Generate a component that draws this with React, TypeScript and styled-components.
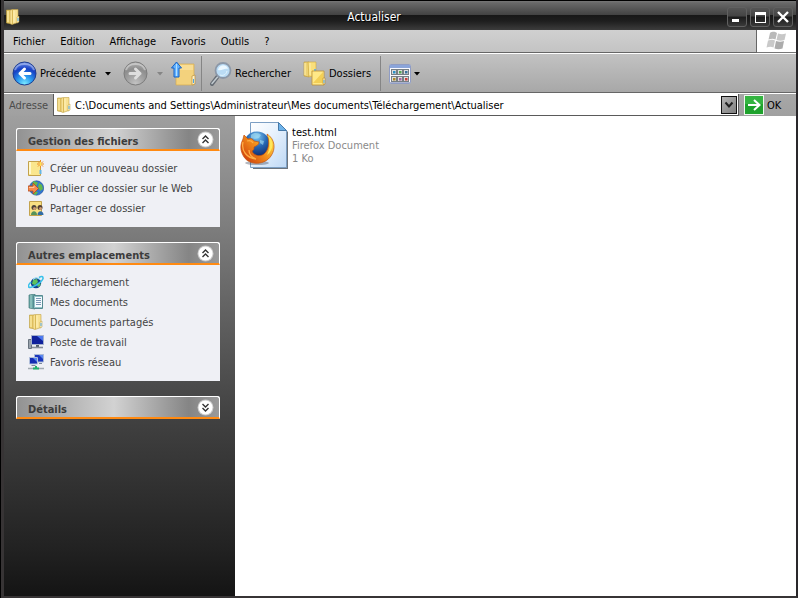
import React from "react";
import styled, { createGlobalStyle, css } from "styled-components";

const uiFont = `"Tahoma", "DejaVu Sans Condensed", "DejaVu Sans", sans-serif`;

const GlobalStyle = createGlobalStyle`
  * { box-sizing: border-box; }
  body { margin: 0; background: #000; font-family: ${uiFont}; font-size: 11px; line-height: 13px; color: #000; }
  button, input { font: inherit; color: inherit; margin: 0; padding: 0; border: 0; background: none; }
  ul, h1, h2, p { margin: 0; padding: 0; font-size: inherit; font-weight: inherit; }
  svg { display: block; flex: none; }
`;

const Window = styled.div`
  min-height: 100vh;
  margin-left: 1px;
  display: flex;
  flex-direction: column;
  border: solid #373435;
  border-width: 0 2px 2px 3px;
  border-right-color: #29272a;
`;

const TitleBar = styled.header`
  height: 30px;
  display: flex;
  align-items: center;
  padding: 3px 3px 0 1px;
  border-top: 1px solid #000;
  background: linear-gradient(#777 0, #686868 2px, #424242 14px, #171717 14px, #1e1e1e 20px, #3c3c3c 29px);
`;

const WindowTitle = styled.h1`
  flex: 1;
  text-align: center;
  color: #fff;
  font-size: 12px;
  line-height: 16px;
  text-shadow: 1px 1px 1px #000;
`;

const WindowButtons = styled.div`
  display: flex;
  gap: 3px;
`;

const WindowButton = styled.button`
  width: 20px;
  height: 20px;
  border: 1px solid #606060;
  border-radius: 3px;
  background: linear-gradient(#555 0, #444 45%, #1b1b1b 50%, #3a3a3a 100%);
`;

const MenuRow = styled.nav`
  height: 24px;
  display: flex;
  background: linear-gradient(#d0d0d0, #c3c3c3);
  border-bottom: 1px solid #fff;
`;

const MenuItems = styled.div`
  flex: 1;
  display: flex;
  padding-left: 1px;
  border-right: 1px solid #666;
  border-bottom: 1px solid #666;
`;

const MenuItem = styled.button`
  padding: 0 7px 0 8px;
`;

const Brand = styled.div`
  width: 39px;
  padding: 1px 0 0 9px;
  background: #fff;
  border-bottom: 1px solid #777;
`;

const ToolBar = styled.div`
  height: 40px;
  display: flex;
  align-items: center;
  padding-left: 8px;
  background: linear-gradient(#c2c2c2, #a7a7a7);
  border-bottom: 1px solid #fff;
  box-shadow: inset 0 -1px #666;
`;

const ToolButton = styled.button<{ $width: number }>`
  display: flex;
  align-items: center;
  gap: 3px;
  min-width: ${(p) => p.$width}px;
  height: 36px;
  text-align: left;
  white-space: nowrap;
`;

const Separator = styled.span`
  width: 1px;
  height: 35px;
  margin-right: 8px;
  background: #858585;
`;

const AddressRow = styled.form`
  height: 22px;
  display: flex;
  align-items: center;
  background: linear-gradient(#a7a7a7, #a0a0a0);
`;

const AddressLabel = styled.label`
  width: 49px;
  padding-left: 5px;
  color: #4c4c4c;
`;

const AddressBox = styled.div`
  flex: 1;
  height: 22px;
  display: flex;
  align-items: center;
  gap: 3px;
  padding: 0 1px 0 2px;
  background: #fff;
  border: solid #5a5a5a;
  border-width: 0 1px 1px 1px;
`;

const AddressInput = styled.input`
  flex: 1;
  min-width: 0;
  height: 18px;
  padding-top: 2px;
  outline: 0;
`;

const DropButton = styled.button`
  width: 16px;
  height: 18px;
  padding-left: 2px;
  border: 1px solid #111;
  background: linear-gradient(135deg, #b4b4b4, #808080);
`;

const GoButton = styled.button`
  display: flex;
  align-items: center;
  gap: 3px;
  width: 57px;
  padding-left: 5px;
`;

const Content = styled.div`
  flex: 1;
  display: flex;
  background: #fff;
`;

const SideBar = styled.aside`
  width: 231px;
  flex: none;
  display: flex;
  flex-direction: column;
  gap: 15px;
  padding: 12px 15px 12px 12px;
  background: linear-gradient(#9f9f9f 0, #8a8a8a 15%, #666 38%, #414141 63%, #222 90%, #141414 100%);
`;

const PanelBox = styled.section`
  background: #eff0f5;
  border-radius: 3px 3px 0 0;
`;

const PanelHeader = styled.button`
  width: 100%;
  height: 23px;
  display: flex;
  align-items: center;
  justify-content: space-between;
  padding: 0 5px 0 11px;
  border: 1px solid #fff;
  border-bottom: 2px solid #ff8a12;
  border-radius: 3px 3px 0 0;
  background: linear-gradient(90deg, #929292 0, #d2d2d2 48%, #858585 85%, #9a9a9a 100%);
  font-weight: bold;
  color: #3c3c3c;
`;

const PanelTitle = styled.span`
  padding-top: 4px;
`;

const PanelList = styled.ul`
  list-style: none;
  padding: 7px 12px 9px 12px;
`;

const PanelLink = styled.a`
  display: flex;
  align-items: center;
  gap: 6px;
  height: 20px;
  color: #444;
  text-decoration: none;
  white-space: nowrap;
`;

const FileArea = styled.main`
  flex: 1;
  padding: 5px;
`;

const FileTile = styled.button`
  display: flex;
  gap: 4px;
  text-align: left;
`;

const FileText = styled.span`
  display: grid;
  align-content: start;
  padding-top: 5px;
`;

const FileLine = styled.span<{ $muted?: boolean }>`
  ${(p) => p.$muted && css`color: #8a8a8a;`}
`;

const FolderIcon = () => (
  <svg width="16" height="16" viewBox="0 0 16 16">
    <path d="M1.500 1h5l1 14-6-1z" fill="#eacb67" stroke="#bb9a3a" strokeWidth=".6" />
    <path d="M5 1.500l2-1h6v13l-6 2-2-1z" fill="#f8e193" stroke="#c2a248" strokeWidth=".6" />
    <path d="M7.500 1v14" stroke="#d8b858" />
    <path d="M9 1.500v12M3 2v11" stroke="#fff2b9" />
    <path d="M12 8l2-1v6l-2 1z" fill="#fff4cb" stroke="#bb9a3a" strokeWidth=".5" />
    <path d="M13 9v3" stroke="#51abe8" />
  </svg>
);

const RoundArrow = ({ forward }: { forward?: boolean }) => {
  const id = forward ? "forwardFill" : "backFill";
  return (
    <svg width="25" height="25" viewBox="0 0 25 25">
      <defs>
        <radialGradient id={id} cx=".5" cy=".95" r=".95">
          <stop offset="0" stopColor={forward ? "#c4c4c4" : "#7ceaff"} />
          <stop offset=".35" stopColor={forward ? "#a6a6a6" : "#2b9cf0"} />
          <stop offset=".7" stopColor={forward ? "#8e8e8e" : "#1740c4"} />
          <stop offset="1" stopColor={forward ? "#b3b3b3" : "#6d8fe8"} />
        </radialGradient>
      </defs>
      <circle cx="12.5" cy="12.5" r="11.5" fill={`url(#${id})`} stroke={forward ? "#7c7c7c" : "#1d3c8c"} />
      <path d="M3 9c2-8 17-8 19 0" fill="none" stroke="#fff" strokeOpacity=".35" strokeWidth="2" />
      <path
        d={forward ? "M7 12.500h10M12.500 8l4.500 4.500-4.500 4.500" : "M18 12.500H8M12.500 8L8 12.500l4.500 4.500"}
        fill="none"
        stroke={forward ? "#dedede" : "#fff"}
        strokeWidth="3"
        strokeLinejoin="round"
        strokeLinecap="round"
      />
    </svg>
  );
};

const Caret = ({ muted }: { muted?: boolean }) => (
  <svg width="6" height="4" viewBox="0 0 6 4">
    <path d="M0 0h6L3 3.5z" fill={muted ? "#858585" : "#000"} />
  </svg>
);

const UpFolderIcon = () => (
  <svg width="25" height="25" viewBox="0 0 25 25">
    <path d="M5 3h18v21H5z" fill="#f3d27d" stroke="#d6ad51" strokeWidth=".7" />
    <path d="M6 4h16v5H6z" fill="#fae1a0" opacity=".7" />
    <path d="M21 15l3-1v9l-3 1z" fill="#fff0c3" stroke="#bc913c" strokeWidth=".7" />
    <path d="M22.500 18v4" stroke="#49a7e4" />
    <path d="M5.500 1l5 6H8v9H3V7H.5z" fill="#64b2ff" stroke="#1560c4" strokeLinejoin="round" />
    <path d="M5.500 3v12" stroke="#b4e0ff" />
  </svg>
);

const SearchIcon = () => (
  <svg width="22" height="24" viewBox="0 0 22 24">
    <path d="M2 22l6-8" stroke="#666d75" strokeWidth="4" strokeLinecap="round" />
    <path d="M2 21.500l6-7" stroke="#c3cbd0" strokeWidth="1.500" strokeLinecap="round" />
    <circle cx="13" cy="8.500" r="7.500" fill="#badcf5" stroke="#8c98a8" strokeWidth="1.800" />
    <path d="M8 8c1-6 9-6 10-1-4-1-6 2-10 1z" fill="#ecf8ff" />
    <path d="M10 13c3 1 6 0 7-4" fill="none" stroke="#e4f6ff" />
  </svg>
);

const FoldersIcon = () => (
  <svg width="23" height="25" viewBox="0 0 23 25">
    <path d="M1 1h5v15l-5-1z" fill="#eed273" stroke="#bd9737" strokeWidth=".6" />
    <path d="M5 1h8v13l-7 2z" fill="#f9df7b" stroke="#cda840" strokeWidth=".6" />
    <path d="M2 2v12M7 2v12" stroke="#fff2b0" />
    <path d="M12 8v5" stroke="#48a8ee" strokeWidth="1.500" />
    <path d="M9 10h12v14H9z" fill="#ffe887" stroke="#bd9137" strokeWidth=".8" />
    <path d="M10 22L20 11v11z" fill="#f3cf56" />
    <path d="M20 17h2v6h-2z" fill="#fff1bb" stroke="#b88a31" strokeWidth=".6" />
    <path d="M21 19v3" stroke="#48a8ee" />
  </svg>
);

const ViewsIcon = () => (
  <svg width="22" height="20" viewBox="0 0 22 20">
    <rect x=".5" y=".5" width="21" height="19" rx="1" fill="#fafaff" stroke="#8f9cc4" />
    <path d="M1 1h20v3H1z" fill="#8ba5da" />
    <path d="M1 18.500h20" stroke="#aab2ce" />
    {["#2c91c5", "#55a855", "#39739e", "#b08b28", "#a565a0", "#c93c3c"].map((color, i) => (
      <g key={color} transform={`translate(${2 + (i % 3) * 6} ${5 + Math.floor(i / 3) * 7})`}>
        <rect x=".5" y=".5" width="5" height="5" fill="#ddd" stroke="#777f84" />
        <rect x="2" y="2" width="2.500" height="2.500" fill={color} />
      </g>
    ))}
  </svg>
);

const FlagIcon = () => (
  <svg width="21" height="20" viewBox="0 0 21 20">
    <path d="M4 2c3-2 5-1 7 0L9.500 8.500c-2-1-4-1-7 0z" fill="#b9b9b9" />
    <path d="M12 2.500c3 1 5 1 8 0L18.500 9c-3 1-5 1-8 0z" fill="#c7c7c7" />
    <path d="M2 9.500c3-1 5-1 7 0l-1.500 7c-2-1-4-1-7 0z" fill="#c9c9c9" />
    <path d="M10 10c3 1 5 1 8 0l-1.500 7.500c-3 1-5 1-8 0z" fill="#acacac" />
  </svg>
);

const GoIcon = () => (
  <svg width="20" height="20" viewBox="0 0 20 20">
    <rect x=".5" y=".5" width="19" height="19" fill="#1ea22c" stroke="#eef8ee" />
    <path d="M1 1h18v8H1z" fill="#33b440" />
    <path d="M4 10h11M10 5l5.500 5-5.500 5" fill="none" stroke="#fff" strokeWidth="2" />
  </svg>
);

const ChevronBadge = ({ down }: { down?: boolean }) => (
  <svg width="17" height="17" viewBox="0 0 17 17">
    <circle cx="8.500" cy="8.500" r="8" fill="#fff" opacity=".5" />
    <circle cx="8.500" cy="8.500" r="7" fill="#fff" />
    <path
      d={down ? "M5.500 5l3 3 3-3M5.500 9l3 3 3-3" : "M5.500 8l3-3 3 3M5.500 12l3-3 3 3"}
      fill="none"
      stroke="#333"
      strokeWidth="1.400"
    />
  </svg>
);

const NewFolderIcon = () => (
  <svg width="16" height="16" viewBox="0 0 16 16">
    <path d="M.5 1.500h12v14H.5z" fill="#fae68d" stroke="#c3a24b" />
    <path d="M2 2v12" stroke="#fff8cc" strokeWidth="2" />
    <path d="M12.500 0v8M9 4h7M10 1.500l5 5M15 1.500l-5 5" stroke="#ee8e24" />
    <path d="M12.500 2v4M11 4h3" stroke="#ffe45a" />
    <path d="M12.500 10v4" stroke="#66b5e3" strokeWidth="2" />
  </svg>
);

const PublishIcon = () => (
  <svg width="16" height="16" viewBox="0 0 16 16">
    <circle cx="8.500" cy="8" r="7.200" fill="#2f76d2" stroke="#1b4a91" strokeWidth=".6" />
    <path d="M5 1.500c3-1 3 1 5 1l-2 4-4-1zM11 3l3 2 1 4-3 2-2-4zM5 11l5 1-2 3-3-1z" fill="#64b84b" />
    <path d="M0 6h5V3l5.500 5.500L5 14v-3H0z" fill="#f58a4c" stroke="#b34a20" strokeWidth=".8" />
    <path d="M1 7.500h5V6" fill="none" stroke="#ffc29b" />
  </svg>
);

const ShareIcon = () => (
  <svg width="16" height="16" viewBox="0 0 16 16">
    <path d="M1.500 1.500h12v14h-12z" fill="#f8e083" stroke="#c3a34d" />
    <circle cx="6" cy="7.500" r="2.500" fill="#4d443a" />
    <circle cx="12" cy="7.500" r="2.500" fill="#503d32" />
    <circle cx="6.500" cy="8.500" r="1.500" fill="#cf9b70" />
    <circle cx="12.500" cy="8.500" r="1.500" fill="#cf9b70" />
    <path d="M3 15c0-5 6-5 6 0z" fill="#55935b" />
    <path d="M9.500 15c0-5 6-5 6 0z" fill="#326da5" />
  </svg>
);

const InternetIcon = () => (
  <svg width="16" height="16" viewBox="0 0 16 16">
    <circle cx="8" cy="9" r="5.200" fill="#12418f" />
    <path d="M5 6l4-1 1 3-3 3-3-1zM10 9l3 1-2 3-2-1z" fill="#5dc25c" />
    <path d="M5 5.500c2-2 5-2 7 0" fill="none" stroke="#9ddff4" strokeWidth="1.500" />
    <path d="M3 8C-1 12 0 14.500 4 13c5-1.500 12-7 11-9.500-.5-1.500-2-1-4 0" fill="none" stroke="#39c1ea" strokeWidth="1.600" />
  </svg>
);

const DocumentsIcon = () => (
  <svg width="16" height="16" viewBox="0 0 16 16">
    <path d="M1 1l6-1v15l-6-1z" fill="#66a6a5" stroke="#427979" strokeWidth=".7" />
    <path d="M3 1v13" stroke="#a7d1cd" />
    <path d="M5.500 1.500h9v13h-9z" fill="#93c3c6" stroke="#568a91" />
    <path d="M7 3h7v10H7z" fill="#f4faff" />
    <path d="M8 4.500h5M8 6.500h5M8 8.500h5M8 10.500h5" stroke="#7c98b5" />
  </svg>
);

const ComputerIcon = () => (
  <svg width="16" height="16" viewBox="0 0 16 16">
    <path d="M.5 5.500h3v9h-3z" fill="#9aa3ad" stroke="#68727e" />
    <path d="M3.500 1.500h12v9h-12z" fill="#10219c" stroke="#a4b0cc" />
    <path d="M9 2h6v5z" fill="#4b78f0" />
    <path d="M8 11h3v2H8z" fill="#555e6b" />
    <path d="M4 13.500h11" stroke="#858e99" strokeWidth="1.600" />
  </svg>
);

const NetworkIcon = () => (
  <svg width="16" height="16" viewBox="0 0 16 16">
    <path d="M6.500.5h9v7.500h-9z" fill="#1b37bd" stroke="#a9b8d6" />
    <path d="M11 1h4v4z" fill="#5a87f0" />
    <path d="M1.500 3.500h8V10h-8z" fill="#142cb3" stroke="#b1bfdb" />
    <path d="M5 4h4v4z" fill="#5686ed" />
    <path d="M3.500 11.500h4M11 9.500h3" stroke="#7b879a" />
    <path d="M0 14.500h16" stroke="#a2abb2" strokeWidth="1.500" />
    <path d="M5 13.500h6v2H5zM7 12h2v2H7z" fill="#23b06d" />
  </svg>
);

const FirefoxDocumentIcon = () => (
  <svg width="48" height="48" viewBox="0 0 48 48">
    <defs>
      <linearGradient id="paper" x1="0" y1="0" x2="1" y2="1">
        <stop offset="0" stopColor="#fff" />
        <stop offset=".4" stopColor="#eaf3fd" />
        <stop offset="1" stopColor="#bfd9f5" />
      </linearGradient>
      <radialGradient id="globe" cx=".5" cy=".2" r=".8">
        <stop offset="0" stopColor="#7cc8f2" />
        <stop offset=".45" stopColor="#2767b4" />
        <stop offset="1" stopColor="#0d1f5e" />
      </radialGradient>
      <linearGradient id="fox" x1=".1" y1=".9" x2="1" y2=".2">
        <stop offset="0" stopColor="#cf3f0c" />
        <stop offset=".5" stopColor="#f18a1a" />
        <stop offset="1" stopColor="#ffe14a" />
      </linearGradient>
    </defs>
    <path d="M12 3h28l8 8v37H13z" fill="#6d747c" />
    <path d="M10.500 1.500h28l8 8v37h-36z" fill="url(#paper)" stroke="#7c9fc4" />
    <path d="M38.500 1.500v8h8z" fill="#6fb3ea" stroke="#467aa9" />
    <ellipse cx="17" cy="42" rx="12" ry="2" fill="#2b3548" opacity=".35" />
    <circle cx="17" cy="24" r="13.500" fill="url(#globe)" />
    <path d="M11 14c3-3 8-2 10 0l-2 3-4 1-4-1zM20 19l4 1-1 4-3-2z" fill="#a9e0f2" opacity=".6" />
    <path
      d="M27 13c8 5 9 15 4 22-6 9-21 10-27 1-4-6-4-12-1-18l1-4 4 4c3-1 5 0 6 2l5 1c0 3-3 4-5 5 0 2 0 3-2 4 2 5 8 6 12 3 5-4 6-12 3-20z"
      fill="url(#fox)"
      stroke="#c4520e"
      strokeWidth=".7"
    />
    <path d="M7 20c3-1 5 0 6 2M3 21c-2 9 4 16 13 17-5-2-7-5-7-9" fill="none" stroke="#ffad45" strokeWidth="1.300" />
    <path d="M28 14c6 6 6 15-1 20 3-6 4-12 1-20z" fill="#ffe75a" />
  </svg>
);

type Place = { label: string; icon: React.ReactNode };

const fileTasks: Place[] = [
  { label: "Créer un nouveau dossier", icon: <NewFolderIcon /> },
  { label: "Publier ce dossier sur le Web", icon: <PublishIcon /> },
  { label: "Partager ce dossier", icon: <ShareIcon /> },
];

const otherPlaces: Place[] = [
  { label: "Téléchargement", icon: <InternetIcon /> },
  { label: "Mes documents", icon: <DocumentsIcon /> },
  { label: "Documents partagés", icon: <FolderIcon /> },
  { label: "Poste de travail", icon: <ComputerIcon /> },
  { label: "Favoris réseau", icon: <NetworkIcon /> },
];

const Panel = ({ title, items }: { title: string; items?: Place[] }) => (
  <PanelBox>
    <PanelHeader type="button" aria-expanded={!!items}>
      <PanelTitle>{title}</PanelTitle>
      <ChevronBadge down={!items} />
    </PanelHeader>
    {items && (
      <PanelList>
        {items.map((item) => (
          <li key={item.label}>
            <PanelLink href="#">
              {item.icon}
              {item.label}
            </PanelLink>
          </li>
        ))}
      </PanelList>
    )}
  </PanelBox>
);

export default function App() {
  return (
    <>
      <GlobalStyle />
      <Window>
        <TitleBar>
          <FolderIcon />
          <WindowTitle>Actualiser</WindowTitle>
          <WindowButtons>
            <WindowButton aria-label="Réduire">
              <svg width="18" height="18"><path d="M4 11h7v3H4z" fill="#fff" /></svg>
            </WindowButton>
            <WindowButton aria-label="Agrandir">
              <svg width="18" height="18"><path d="M4 4h11v11H4z M5 7v7h9V7z" fill="#fff" fillRule="evenodd" /></svg>
            </WindowButton>
            <WindowButton aria-label="Fermer">
              <svg width="18" height="18"><path d="M4 4l10 10M14 4L4 14" stroke="#fff" strokeWidth="2.400" /></svg>
            </WindowButton>
          </WindowButtons>
        </TitleBar>
        <MenuRow>
          <MenuItems>
            {["Fichier", "Edition", "Affichage", "Favoris", "Outils", "?"].map((label) => (
              <MenuItem key={label}>{label}</MenuItem>
            ))}
          </MenuItems>
          <Brand><FlagIcon /></Brand>
        </MenuRow>
        <ToolBar>
          <ToolButton $width={93}><RoundArrow />Précédente</ToolButton>
          <ToolButton $width={18} aria-label="Historique précédent"><Caret /></ToolButton>
          <ToolButton $width={34} aria-label="Suivante"><RoundArrow forward /></ToolButton>
          <ToolButton $width={14} aria-label="Historique suivant"><Caret muted /></ToolButton>
          <ToolButton $width={30} aria-label="Dossier parent"><UpFolderIcon /></ToolButton>
          <Separator />
          <ToolButton $width={93}><SearchIcon />Rechercher</ToolButton>
          <ToolButton $width={77}><FoldersIcon />Dossiers</ToolButton>
          <Separator />
          <ToolButton $width={31} aria-label="Affichages"><ViewsIcon /><Caret /></ToolButton>
        </ToolBar>
        <AddressRow onSubmit={(e) => e.preventDefault()}>
          <AddressLabel htmlFor="address">Adresse</AddressLabel>
          <AddressBox>
            <FolderIcon />
            <AddressInput
              id="address"
              defaultValue="C:\Documents and Settings\Administrateur\Mes documents\Téléchargement\Actualiser"
            />
            <DropButton type="button" aria-label="Dérouler la liste">
              <svg width="10" height="8" viewBox="0 0 10 8"><path d="M1.500 1.500l3.500 4 3.500-4" fill="none" stroke="#222" strokeWidth="2" /></svg>
            </DropButton>
          </AddressBox>
          <GoButton type="submit"><GoIcon />OK</GoButton>
        </AddressRow>
        <Content>
          <SideBar>
            <Panel title="Gestion des fichiers" items={fileTasks} />
            <Panel title="Autres emplacements" items={otherPlaces} />
            <Panel title="Détails" />
          </SideBar>
          <FileArea>
            <FileTile>
              <FirefoxDocumentIcon />
              <FileText>
                <FileLine>test.html</FileLine>
                <FileLine $muted>Firefox Document</FileLine>
                <FileLine $muted>1 Ko</FileLine>
              </FileText>
            </FileTile>
          </FileArea>
        </Content>
      </Window>
    </>
  );
}
